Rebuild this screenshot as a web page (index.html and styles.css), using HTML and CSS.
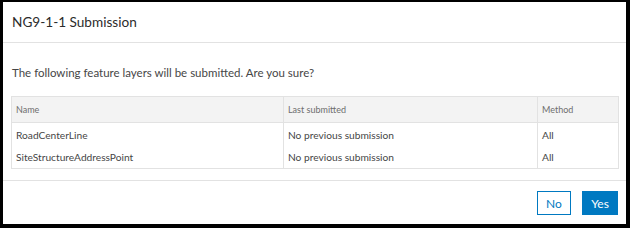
FILE: index.html
```html
<!DOCTYPE html>
<html lang="en">
<head>
  <meta charset="UTF-8">
  <title>NG9-1-1 Submission</title>
  <link rel="stylesheet" href="styles.css">
</head>
<body>
  <div class="dialog">
    <div class="dialog-header">NG9-1-1 Submission</div>

    <div class="dialog-body">
      <p class="prompt">The following feature layers will be submitted. Are you sure?</p>

      <table class="layers">
        <colgroup>
          <col class="col-name">
          <col class="col-last">
          <col class="col-method">
        </colgroup>
        <thead>
          <tr>
            <th>Name</th>
            <th>Last submitted</th>
            <th>Method</th>
          </tr>
        </thead>
        <tbody>
          <tr>
            <td>RoadCenterLine</td>
            <td>No previous submission</td>
            <td>All</td>
          </tr>
          <tr>
            <td>SiteStructureAddressPoint</td>
            <td>No previous submission</td>
            <td>All</td>
          </tr>
        </tbody>
      </table>
    </div>

    <div class="dialog-footer">
      <button class="btn btn-clear">No</button>
      <button class="btn btn-primary">Yes</button>
    </div>
  </div>
</body>
</html>
```

FILE: styles.css
```css
* {
  margin: 0;
  padding: 0;
  box-sizing: border-box;
}

:root {
  --blue: #0079c1;
  --line: #e2e2e2;
  --text: #464646;
  --title: #2b2b2b;
}

body {
  background: #000;
  font-family: 'Lato', 'Open Sans', sans-serif;
  color: var(--text);
}

.dialog {
  background: #fff;
  margin: 2px 4px 4px 3px;
  height: 222px;
  display: flex;
  flex-direction: column;
}

/* Header */
.dialog-header {
  height: 41px;
  display: flex;
  align-items: center;
  padding: 0 9px;
  font-size: 13.6px;
  color: var(--title);
  border-bottom: 1px solid var(--line);
}

/* Body */
.dialog-body {
  padding: 0 8px;
}

.prompt {
  font-size: 11.5px;
  line-height: 18px;
  margin: 21px 0 14px 1px;
}

.layers {
  width: 100%;
  table-layout: fixed;
  border-collapse: collapse;
  border: 1px solid var(--line);
}

.col-name { width: 272px; }
.col-last { width: 254px; }
.col-method { width: 81px; }

.layers th {
  background: #f3f3f3;
  font-weight: normal;
  font-size: 9px;
  color: #6e6e6e;
  text-align: left;
  height: 26px;
  padding: 0 4px;
  border-right: 1px solid var(--line);
  border-bottom: 1px solid var(--line);
}

.layers td {
  font-size: 10.2px;
  height: 23px;
  padding: 1px 4px 0;
  border-right: 1px solid var(--line);
}

/* Footer */
.dialog-footer {
  margin-top: auto;
  border-top: 1px solid var(--line);
  padding: 10px 8px 9px;
  display: flex;
  justify-content: flex-end;
  gap: 11px;
}

.btn {
  height: 24px;
  font-family: inherit;
  font-size: 12px;
  border: 1px solid var(--blue);
  cursor: pointer;
}

.btn-clear {
  width: 34px;
  background: #fff;
  color: var(--blue);
}

.btn-primary {
  width: 36px;
  background: var(--blue);
  color: #fff;
}
```
